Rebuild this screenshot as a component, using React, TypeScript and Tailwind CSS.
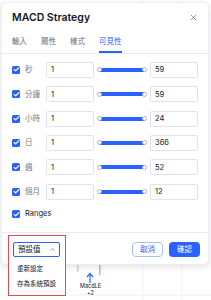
import { X, ChevronUp, Check } from "lucide-react";

const ROWS = [
  { label: "秒", min: "1", max: "59" },
  { label: "分鐘", min: "1", max: "59" },
  { label: "小時", min: "1", max: "24" },
  { label: "日", min: "1", max: "366" },
  { label: "週", min: "1", max: "52" },
  { label: "個月", min: "1", max: "12" },
];

const TABS = ["輸入", "屬性", "樣式", "可見性"];

function Box() {
  return (
    <span className="flex h-[8px] w-[8px] shrink-0 items-center justify-center rounded-[1.5px] bg-[#2962ff]">
      <Check className="h-[7px] w-[7px] text-white" strokeWidth={4} />
    </span>
  );
}

function Field({ value }: { value: string }) {
  return (
    <div className="flex h-[16px] w-[48px] shrink-0 items-center rounded-[2px] border border-[#e0e3eb] bg-white pl-[4px] text-[7.5px] text-[#131722]">
      {value}
    </div>
  );
}

function Slider() {
  return (
    <div className="relative mx-[5px] flex h-[16px] w-[46px] shrink-0 items-center">
      <div className="h-[4px] w-full rounded-[1px] bg-[#2962ff]" />
      <span className="absolute left-[-2px] h-[5px] w-[5px] rounded-full border border-[#b2b5be] bg-white" />
      <span className="absolute right-[-2px] h-[5px] w-[5px] rounded-full border border-[#b2b5be] bg-white" />
    </div>
  );
}

export default function App() {
  return (
    <div
      className="relative h-[300px] w-[211px] overflow-hidden bg-white"
      style={{ fontFamily: 'Inter, "Noto Sans CJK TC", sans-serif' }}
    >
      {/* chart behind the dialog */}
      <svg className="absolute inset-0" width="211" height="300" viewBox="0 0 211 300">
        <line x1="143" y1="0" x2="143" y2="300" stroke="#f0f3fa" />
        <line x1="182" y1="0" x2="182" y2="300" stroke="#f0f3fa" />
        <line x1="0" y1="295" x2="211" y2="295" stroke="#eceff4" />
        <rect x="77" y="264" width="1.5" height="8" fill="#f7c5c9" />
        <rect x="99" y="264" width="1.5" height="11" fill="#f49ca3" />
        <line x1="90" y1="274" x2="90" y2="283" stroke="#2962ff" strokeWidth="1.2" />
        <path d="M87 277 L90 273.5 L93 277" fill="none" stroke="#2962ff" strokeWidth="1.2" />
      </svg>
      <div className="absolute left-[80px] top-[283px] text-center text-[5.5px] leading-[7px] text-[#131722]">
        <div>MacdLE</div>
        <div>+2</div>
      </div>

      {/* dialog */}
      <div className="absolute left-[1px] top-[2px] flex h-[263px] w-[208px] flex-col rounded-[5px] border border-[#eceef2] bg-white shadow-[0_2px_6px_rgba(0,0,0,0.12)]">
        <div className="flex items-center justify-between pl-[10px] pr-[10px] pt-[7px]">
          <span className="text-[10.5px] font-semibold text-[#131722]">MACD Strategy</span>
          <X className="h-[9px] w-[9px] text-[#50535e]" strokeWidth={1.6} />
        </div>
        <div className="mt-[10px] flex gap-[14px] border-b border-[#e8eaef] pl-[10px]">
          {TABS.map((t, i) => (
            <div
              key={t}
              className={`pb-[3px] text-[7.5px] leading-[12px] ${
                i === 3 ? "border-b-[2px] border-[#2962ff] text-[#2962ff]" : "border-b-[2px] border-transparent text-[#6a6d78]"
              }`}
            >
              {t}
            </div>
          ))}
        </div>

        <div className="flex flex-col gap-[8.4px] pl-[10px] pr-[8px] pt-[8px]">
          {ROWS.map((r) => (
            <div key={r.label} className="flex h-[16px] items-center">
              <Box />
              <span className="ml-[5px] w-[21px] text-[7.5px] text-[#787b86]">{r.label}</span>
              <Field value={r.min} />
              <Slider />
              <Field value={r.max} />
            </div>
          ))}
          <div className="flex h-[12px] items-center">
            <Box />
            <span className="ml-[5px] text-[7.5px] text-[#131722]">Ranges</span>
          </div>
        </div>

        <div className="mt-auto flex items-center justify-between border-t border-[#e8eaef] pb-[7px] pl-[11px] pr-[8px] pt-[9px]">
          <div className="flex h-[15px] w-[47px] items-center justify-between rounded-[2px] border border-[#2962ff] pl-[4px] pr-[3px] text-[7.5px] text-[#131722]">
            預設值
            <ChevronUp className="h-[7px] w-[7px] text-[#50535e]" strokeWidth={2} />
          </div>
          <div className="flex gap-[6px]">
            <div className="flex h-[15px] w-[31px] items-center justify-center rounded-[4px] border border-[#a9bdf8] text-[7.5px] text-[#2962ff]">
              取消
            </div>
            <div className="flex h-[15px] w-[31px] items-center justify-center rounded-[4px] bg-[#2962ff] text-[7.5px] text-white">
              確認
            </div>
          </div>
        </div>
      </div>

      {/* preset menu */}
      <div className="absolute left-[9px] top-[262px] flex w-[56px] flex-col gap-[6px] bg-white pb-[6px] pl-[8px] pt-[3px] text-[6.5px] leading-[9px] text-[#131722]">
        <span>重新設定</span>
        <span>存為系統預設</span>
      </div>

      {/* annotation */}
      <div className="absolute left-[8px] top-[235px] h-[61px] w-[58px] border border-[#e5484d]" />
    </div>
  );
}
